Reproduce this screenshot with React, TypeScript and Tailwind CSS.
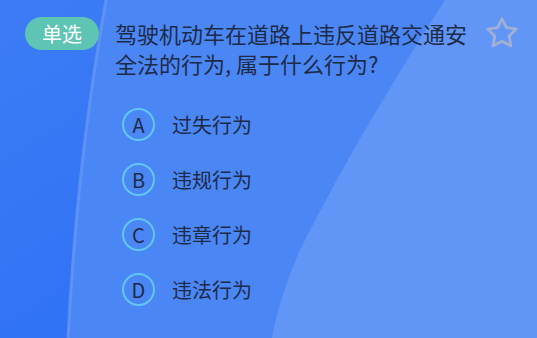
import React from "react";

const options = [
  { k: "A", t: "过失行为" },
  { k: "B", t: "违规行为" },
  { k: "C", t: "违章行为" },
  { k: "D", t: "违法行为" },
];

export default function App() {
  return (
    <div
      className="relative w-[537px] h-[338px] overflow-hidden bg-[#3274f4]"
      style={{ fontFamily: '"Noto Sans CJK SC", "Noto Sans", sans-serif' }}
    >
      <svg className="absolute inset-0" width="537" height="338" viewBox="0 0 537 338">
        <defs>
          <linearGradient id="lg" x1="0" y1="0" x2="1" y2="1">
            <stop offset="0" stopColor="#3d7cf5" />
            <stop offset="1" stopColor="#276bf6" />
          </linearGradient>
        </defs>
        <rect width="537" height="338" fill="url(#lg)" />
        <path d="M106 0 C 88 100, 74 220, 68 338 L 537 338 L 537 0 Z" fill="#4b86f5" />
        <path d="M106 0 C 88 100, 74 220, 68 338" stroke="#6a9bf6" strokeWidth="3" fill="none" opacity="0.7" />
        <path d="M445 0 C 400 70, 345 160, 300 250 C 288 278, 278 305, 272 338 L 537 338 L 537 0 Z" fill="#6296f6" />
      </svg>

      <div className="relative flex flex-col">
        <div className="flex items-start pt-[17px]">
          <div className="ml-[25px] w-[74px] h-[33px] rounded-full bg-[#5ec4b3] flex items-center justify-center text-white text-[20px] leading-none">
            单选
          </div>
          <div className="ml-[16px] w-[360px] text-[22px] leading-[30px] text-[#1e2b48] mt-[1px]">
            驾驶机动车在道路上违反道路交通安全法的行为, 属于什么行为?
          </div>
          <div className="ml-[8px] -mt-[2px]">
            <svg width="38" height="36" viewBox="0 0 36 34">
              <path
                d="M18 3.5 L22.2 11.9 L31.5 13.3 L24.8 19.9 L26.4 29.2 L18 24.8 L9.6 29.2 L11.2 19.9 L4.5 13.3 L13.8 11.9 Z"
                fill="none"
                stroke="#a3b0d4"
                strokeWidth="2.6"
                strokeLinejoin="round"
              />
            </svg>
          </div>
        </div>

        <div className="flex flex-col gap-[22px] mt-[30px] ml-[122px]">
          {options.map((o) => (
            <div key={o.k} className="flex items-center h-[33px]">
              <div className="w-[33px] h-[33px] rounded-full border-2 border-[#62c6f2] flex items-center justify-center text-[20px] text-[#1e2b48] leading-none">
                {o.k}
              </div>
              <div className="ml-[17px] text-[20px] text-[#1e2b48] leading-none">{o.t}</div>
            </div>
          ))}
        </div>
      </div>
    </div>
  );
}
